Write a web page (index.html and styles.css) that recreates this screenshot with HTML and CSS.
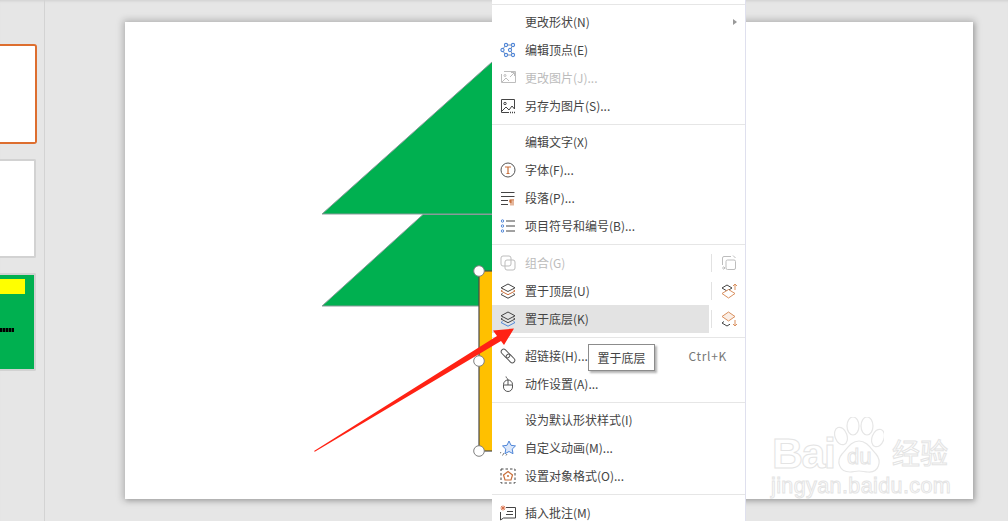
FILE: index.html
```html
<!DOCTYPE html>
<html lang="en">
<head>
  <meta charset="UTF-8">
  <meta name="viewport" content="width=device-width, initial-scale=1.0">
  <title>演示文稿</title>
  <link rel="stylesheet" href="styles.css">
</head>
<body>
  <div class="app">
    <!-- slide thumbnails -->
    <aside class="thumbs">
      <div class="thumb thumb-active"></div>
      <div class="thumb"></div>
      <div class="thumb thumb-green">
        <div class="thumb-yellow"></div>
        <div class="thumb-scribble"></div>
      </div>
    </aside>

    <main class="stage">
      <div class="slide">
        <svg class="slide-art" viewBox="125 22 848 477" width="848" height="477">
          <polygon points="322,214 492,62 600,62 600,214" fill="#00b050" stroke="#8a9a9a" stroke-width="1"/>
          <polygon points="322,306 423,214.5 600,214.5 600,306" fill="#00b050" stroke="#8a9a9a" stroke-width="1"/>
          <rect x="479" y="271" width="60" height="180" fill="#ffc000" stroke="#4a4a4a" stroke-width="1.2"/>
          <circle cx="479" cy="271" r="5.3" fill="#fff" stroke="#7f7f7f"/>
          <circle cx="479" cy="361" r="5.3" fill="#fff" stroke="#7f7f7f"/>
          <circle cx="479" cy="451" r="5.3" fill="#fff" stroke="#7f7f7f"/>
        </svg>

        <!-- baidu watermark -->
        <div class="mark">
          <span class="mark-bai">Bai</span>
          <svg class="mark-paw" viewBox="0 0 50 60" width="50" height="60">
            <g fill="#fff" stroke="#e6e6e6" stroke-width="1.2">
              <ellipse cx="7" cy="19" rx="6" ry="9" transform="rotate(-20 7 19)"/>
              <ellipse cx="19" cy="9" rx="6" ry="9"/>
              <ellipse cx="33" cy="9" rx="6" ry="9"/>
              <ellipse cx="44" cy="21" rx="6" ry="9" transform="rotate(20 44 21)"/>
              <path d="M25 24c8 0 12 8 17 13 6 7 3 19-8 18-3 0-6-1-9-1s-6 1-9 1C5 55 2 44 8 37c5-5 9-13 17-13z"/>
            </g>
          </svg>
          <span class="mark-du">du</span>
          <span class="mark-cn">经验</span>
          <span class="mark-url">jingyan.baidu.com</span>
        </div>
      </div>
    </main>

    <!-- context menu -->
    <div class="menu">
      <div class="sep"></div>
      <div class="row">
        <span class="ico"></span><span class="label">更改形状(N)</span><span class="caret"></span>
      </div>
      <div class="row">
        <span class="ico"><svg viewBox="0 0 16 16" width="16" height="16"><path d="M2 8 6 3h7l-3 5 3 5H6z" fill="none" stroke="#7f8da6"/><g fill="#fff" stroke="#4f86d8" stroke-width="1.1"><circle cx="2.500" cy="8" r="1.600"/><circle cx="6" cy="3" r="1.600"/><circle cx="13" cy="3" r="1.600"/><circle cx="10" cy="8" r="1.600"/><circle cx="13" cy="13" r="1.600"/><circle cx="6" cy="13" r="1.600"/></g></svg></span>
        <span class="label">编辑顶点(E)</span>
      </div>
      <div class="row row-off">
        <span class="ico"><svg viewBox="0 0 16 16" width="16" height="16" fill="none" stroke="#bdbdbd"><path d="M4 1.500h11.500v11H1.500V4"/><path d="M2 12l4-4 3 3M10 7l4-4M11 2.500h3.500V6"/><circle cx="5" cy="5.500" r="1"/></svg></span>
        <span class="label">更改图片(J)...</span>
      </div>
      <div class="row">
        <span class="ico"><svg viewBox="0 0 16 16" width="16" height="16" fill="none" stroke="#444"><path d="M9 14.500H1.500v-13h13V11"/><path d="M2 13l4-4 3 3 3-4 2.500 3"/><circle cx="5" cy="5.500" r="1.200"/><path d="M10 14.500h1M12 14.500h1M14 14.500h1" stroke-width="1.400"/></svg></span>
        <span class="label">另存为图片(S)...</span>
      </div>
      <div class="sep"></div>
      <div class="row">
        <span class="ico"></span><span class="label">编辑文字(X)</span>
      </div>
      <div class="row">
        <span class="ico"><svg viewBox="0 0 16 16" width="16" height="16" fill="none"><circle cx="8" cy="8" r="7" stroke="#555"/><path d="M5 5h6M8 5v6.500M6.500 11.500h3" stroke="#c96f3b" stroke-width="1.200"/></svg></span>
        <span class="label">字体(F)...</span>
      </div>
      <div class="row">
        <span class="ico"><svg viewBox="0 0 16 16" width="16" height="16" fill="none"><path d="M1 2.500h13.500M1 6.500h13.500M1 10.500h7M1 14.500h7" stroke="#444"/><path d="M11 9.500v6M13 9.500v6" stroke="#c96f3b"/><path d="M9.500 9.500H14v.8h-2.500V13h-.8c-1 0-1.500-.8-1.500-1.700s.6-1.800.3-1.800z" fill="#c96f3b"/></svg></span>
        <span class="label">段落(P)...</span>
      </div>
      <div class="row">
        <span class="ico"><svg viewBox="0 0 16 16" width="16" height="16" fill="none"><path d="M6 3h9M6 8h9M6 13h9" stroke="#444"/><g stroke="#4f86d8"><circle cx="2.500" cy="3" r="1.200"/><circle cx="2.500" cy="8" r="1.200"/><circle cx="2.500" cy="13" r="1.200"/></g></svg></span>
        <span class="label">项目符号和编号(B)...</span>
      </div>
      <div class="sep sep-tall"></div>
      <div class="row row-off row-split">
        <div class="row-main">
          <span class="ico"><svg viewBox="0 0 16 16" width="16" height="16" fill="none" stroke="#bdbdbd"><rect x="1" y="1" width="10" height="10" rx="2"/><rect x="5" y="5" width="10" height="10" rx="2"/></svg></span>
          <span class="label">组合(G)</span>
        </div>
        <div class="side">
          <svg viewBox="0 0 16 16" width="16" height="16" fill="none" stroke="#bdbdbd"><path d="M10 1.500H3a1.500 1.500 0 0 0-1.500 1.500v7"/><rect x="5" y="5" width="9.500" height="9.500" rx="1.500"/><path d="M12 .5l2.500 2.500M1 13h3M2.500 11.500 4 13l-1.500 1.500"/></svg>
        </div>
      </div>
      <div class="row row-split">
        <div class="row-main">
          <span class="ico"><svg viewBox="0 0 16 16" width="16" height="16" fill="none" stroke-linejoin="round"><path d="M8 1 15 4.800 8 8.500 1 4.800z" stroke="#444"/><path d="M2.500 7 1 8l7 3.700L15 8l-1.500-1" stroke="#c96f3b"/><path d="M2.500 10.500 1 11.500l7 3.700 7-3.700-1.500-1" stroke="#444"/></svg></span>
          <span class="label">置于顶层(U)</span>
        </div>
        <div class="side">
          <svg viewBox="0 0 16 16" width="16" height="16" fill="none" stroke-linejoin="round"><path d="M6 2 11 5 6 8 1 5z" stroke="#444"/><path d="M7.500 6.500 14 10.500 7.500 15 1 10.500z" fill="#fff" stroke="#d9905f"/><path d="M14 7V1M12 3l2-2 2 2" stroke="#d9905f"/></svg>
        </div>
      </div>
      <div class="row row-split row-hover">
        <div class="row-main">
          <span class="ico"><svg viewBox="0 0 16 16" width="16" height="16" fill="none" stroke-linejoin="round"><path d="M8 1 15 4.800 8 8.500 1 4.800z" stroke="#444"/><path d="M2.500 7 1 8l7 3.700L15 8l-1.500-1" stroke="#444"/><path d="M2.500 10.500 1 11.500l7 3.700 7-3.700-1.500-1" stroke="#4f86d8"/></svg></span>
          <span class="label">置于底层(K)</span>
        </div>
        <div class="side">
          <svg viewBox="0 0 16 16" width="16" height="16" fill="none" stroke-linejoin="round"><path d="M3 10.500 1 12l5 3 3-1.800" stroke="#444"/><path d="M7.500 1 14 5.500 7.500 10 1 5.500z" fill="#fbeee5" stroke="#d9905f"/><path d="M14 9v6M12 13l2 2 2-2" stroke="#d9905f"/></svg>
        </div>
      </div>
      <div class="sep sep-tall"></div>
      <div class="row">
        <span class="ico"><svg viewBox="0 0 16 16" width="16" height="16" fill="none" stroke="#555"><rect x="0.500" y="3" width="10" height="5" rx="2.500" transform="rotate(45 5.500 5.500)"/><rect x="5.500" y="8" width="10" height="5" rx="2.500" transform="rotate(45 10.500 10.500)"/></svg></span>
        <span class="label">超链接(H)...</span>
        <span class="shortcut">Ctrl+K</span>
      </div>
      <div class="row">
        <span class="ico"><svg viewBox="0 0 16 16" width="16" height="16" fill="none" stroke="#555"><rect x="3.500" y="4" width="9" height="11.500" rx="4.500"/><path d="M3.500 9h9M8 4v5M8 4c0-2-2-1.500-2-3.500"/></svg></span>
        <span class="label">动作设置(A)...</span>
      </div>
      <div class="sep"></div>
      <div class="row">
        <span class="ico"></span><span class="label">设为默认形状样式(I)</span>
      </div>
      <div class="row">
        <span class="ico"><svg viewBox="0 0 16 16" width="16" height="16" fill="none"><path d="M9 1l2 4.300 4.500.6-3.300 3.200.8 4.600L9 11.500 5 13.700l.8-4.600L2.500 5.900 7 5.300z" fill="#dbe7fa" stroke="#4f86d8"/><path d="M1 12l-1 1.500M4 13l-1.500 2.500M7 14l-1 1.500" stroke="#777"/></svg></span>
        <span class="label">自定义动画(M)...</span>
      </div>
      <div class="row">
        <span class="ico"><svg viewBox="0 0 16 16" width="16" height="16" fill="none"><rect x="1" y="1" width="14" height="14" stroke="#444" stroke-dasharray="2.500 2"/><path d="M8 3.500 12.500 7 11 12H5L3.500 7z" stroke="#c96f3b" stroke-width="1.200"/><circle cx="8" cy="8" r="1" fill="#c96f3b"/></svg></span>
        <span class="label">设置对象格式(O)...</span>
      </div>
      <div class="sep sep-tall"></div>
      <div class="row">
        <span class="ico"><svg viewBox="0 0 16 16" width="16" height="16" fill="none"><path d="M6 2.500h9.500v10.500H3.500L.5 15V7" stroke="#444"/><path d="M7 6.500h6M6 9.500h7" stroke="#444"/><path d="M3 .5v5M.5 3h5M1.200 1.200l3.600 3.600M4.800 1.200 1.200 4.800" stroke="#d9704a"/></svg></span>
        <span class="label">插入批注(M)</span>
      </div>
    </div>

    <div class="tooltip">置于底层</div>

    <!-- red annotation arrow -->
    <svg class="arrow" viewBox="0 0 1008 521" width="1008" height="521">
      <polygon points="314,451 497,336 493,330.500 514,328.500 504,345 501,341 314.800,451.800" fill="#ff2214"/>
    </svg>
  </div>
</body>
</html>
```

FILE: styles.css
```css
/* General styles */
html, body {
  margin: 0;
  padding: 0;
}

body {
  width: 1008px;
  height: 521px;
  overflow: hidden;
  background: #e6e6e6;
  color: #444;
  font-family: "Noto Sans CJK SC", "Liberation Sans", sans-serif;
  font-size: 12px;
}

.app {
  position: relative;
  display: flex;
  width: 1008px;
  height: 521px;
  overflow: hidden;
  box-shadow: inset 0 3px 3px -2px rgba(0, 0, 0, 0.1);
}

/* Thumbnails */
.thumbs {
  flex: none;
  width: 45px;
  box-sizing: border-box;
  border-right: 1px solid #d3d3d3;
  padding-top: 44px;
  display: flex;
  flex-direction: column;
  gap: 15px;
}

.thumb {
  width: 36px;
  height: 99px;
  box-sizing: border-box;
  background: #fff;
  border: 2px solid #d2d2d2;
  border-left: 0;
  border-radius: 0 2px 2px 0;
}

.thumb-active {
  width: 37px;
  height: 100px;
  border-color: #dd6e2f;
  border-radius: 0 3px 3px 0;
}

.thumb-green {
  background: #00b050;
  height: 98px;
}

.thumb-yellow {
  width: 25px;
  height: 15px;
  margin-top: 4px;
  background: #ffff00;
}

.thumb-scribble {
  width: 14px;
  height: 4px;
  margin-top: 34px;
  background: repeating-linear-gradient(90deg, #000 0 2px, #0a5a2a 2px 3px);
}

/* Slide area */
.stage {
  flex: 1;
  padding: 22px 35px 0 80px;
  box-sizing: border-box;
}

.slide {
  position: relative;
  width: 848px;
  height: 477px;
  background: #fff;
  box-shadow: 0 0 7px 2px rgba(0, 0, 0, 0.22), 2px 2px 4px rgba(0, 0, 0, 0.12);
  overflow: hidden;
}

.slide-art {
  position: absolute;
  left: 0;
  top: 0;
}

/* Watermark sits on the slide */
.mark {
  position: absolute;
  left: 640px;
  top: 395px;
  width: 200px;
  height: 82px;
  color: #fff;
  font-family: "Liberation Sans", sans-serif;
  -webkit-text-stroke: 1px #e4e4e4;
}

.mark span {
  position: absolute;
  line-height: 1;
}

.mark .mark-bai {
  left: 7px;
  top: 17px;
  font-size: 43px;
  font-weight: bold;
  letter-spacing: -1.500px;
  line-height: 0.9;
}

.mark-paw {
  position: absolute;
  left: 69px;
  top: 0;
}

.mark-du {
  left: 82px;
  top: 29px;
  font-size: 22px;
}

.mark-cn {
  left: 127px;
  top: 21px;
  font-family: "Noto Sans CJK SC", sans-serif;
  font-size: 28px;
}

.mark-url {
  left: 6px;
  top: 59px;
  font-size: 21.500px;
  letter-spacing: 0.4px;
}

/* Context menu */
.menu {
  position: absolute;
  left: 492px;
  top: 0;
  width: 253px;
  height: 540px;
  background: #fff;
  border-right: 1px solid #dfe0ee;
}

.sep {
  height: 8px;
  display: flex;
  align-items: center;
}

.sep::after {
  content: "";
  flex: 1;
  height: 1px;
  background: #e6e6e6;
}

.sep-tall {
  height: 9px;
}

.row {
  display: flex;
  align-items: center;
  height: 28px;
}

.row-main {
  display: flex;
  align-items: center;
  width: 217px;
  height: 28px;
  flex: none;
}

.row-hover .row-main {
  background: #e3e3e3;
}

.row-off .label {
  color: #bcbcbc;
}

.ico {
  flex: none;
  width: 33px;
  height: 16px;
  box-sizing: border-box;
  padding-left: 8px;
}

.ico svg,
.side svg {
  display: block;
}

.label {
  flex: 1;
  padding-bottom: 2px;
  white-space: nowrap;
}

.caret {
  width: 0;
  height: 0;
  margin-right: 8px;
  border-left: 4px solid #999;
  border-top: 3px solid transparent;
  border-bottom: 3px solid transparent;
}

.shortcut {
  margin-right: 18px;
  padding-bottom: 2px;
  color: #777;
  letter-spacing: 0.7px;
}

.side {
  display: flex;
  align-items: center;
  justify-content: center;
  width: 34px;
  height: 18px;
  margin-left: 2px;
  border-left: 1px solid #e2e2e2;
}

/* Tooltip and arrow lie over the menu */
.tooltip {
  position: absolute;
  left: 588px;
  top: 344px;
  width: 65px;
  height: 25px;
  line-height: 25px;
  text-align: center;
  background: #fff;
  border: 1px solid #8c8c8c;
  box-shadow: 2px 2px 2px rgba(0, 0, 0, 0.3);
}

.arrow {
  position: absolute;
  left: 0;
  top: 0;
  pointer-events: none;
}
```
